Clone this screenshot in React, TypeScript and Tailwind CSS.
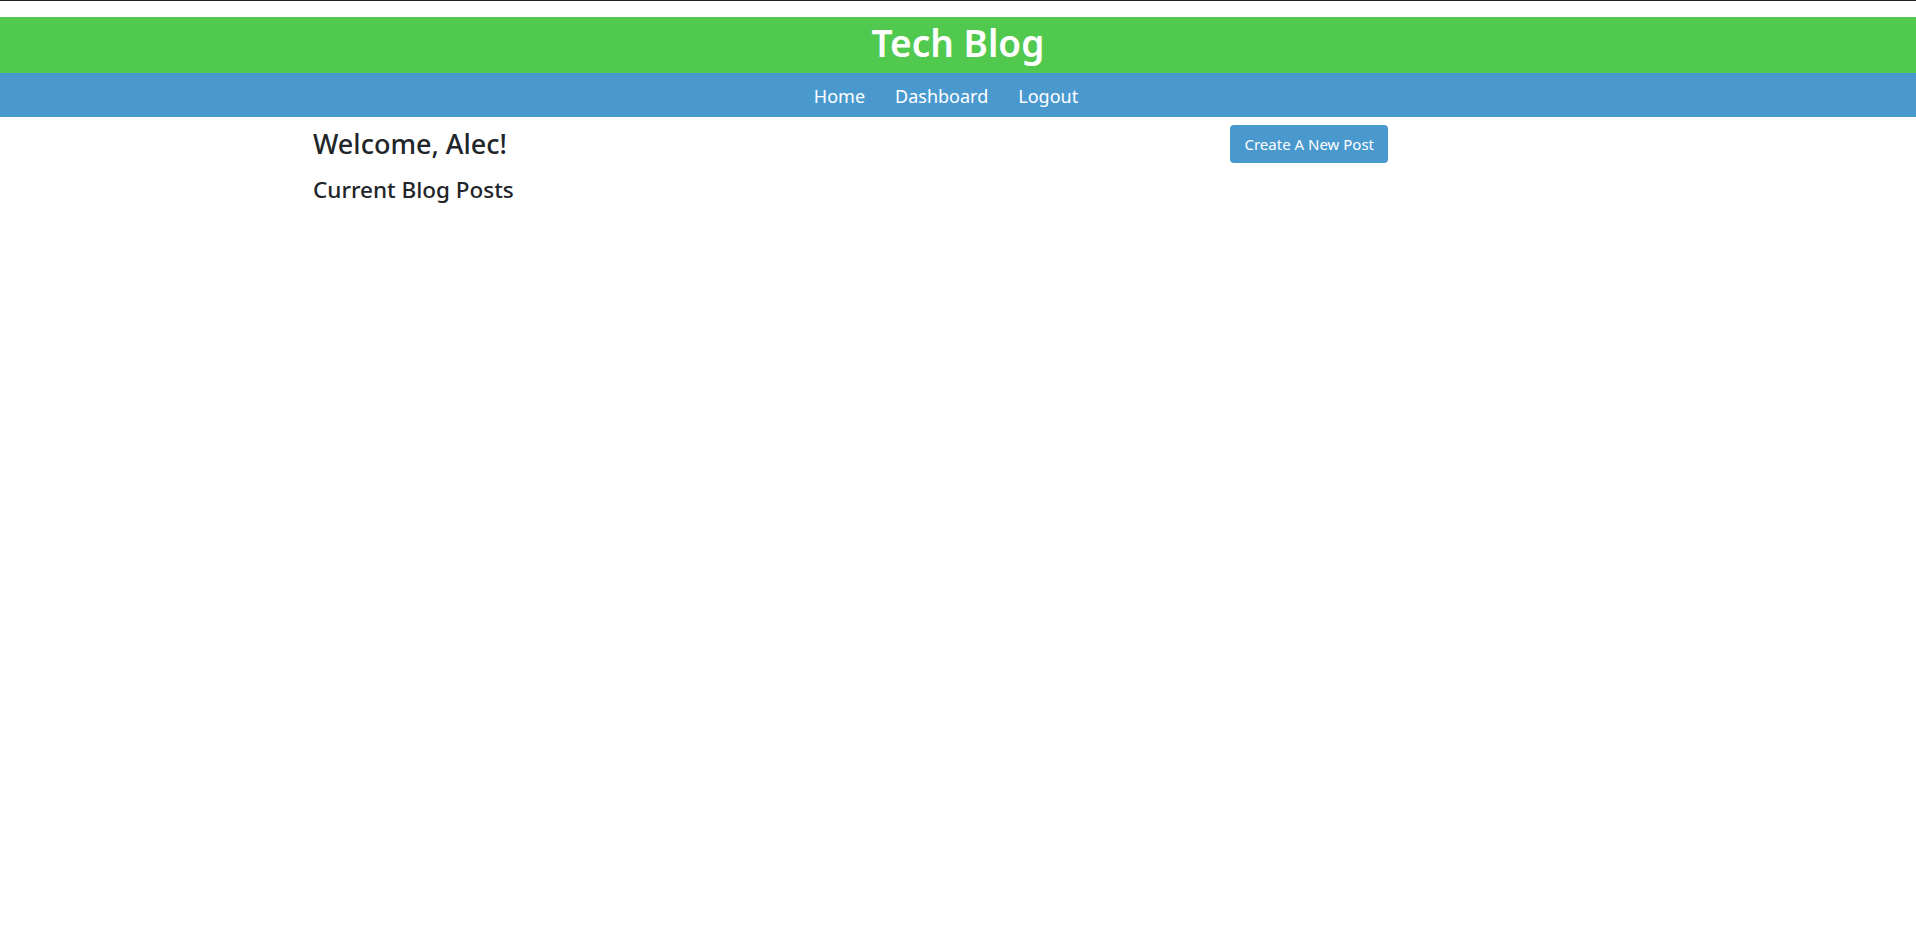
import React from 'react';

const font = { fontFamily: '"Noto Sans", "Open Sans", sans-serif' };

export default function App() {
    return (
        <div className="min-h-screen bg-white text-[#212529]" style={font}>
            <div className="h-px bg-[#222222]"></div>
            <div className="h-4"></div>
            <header className="h-[56px] bg-[#51c94f] flex items-center justify-center pb-[6px]">
                <h1 className="text-[37px] font-semibold text-white leading-none">Tech Blog</h1>
            </header>
            <nav className="h-[44px] bg-[#4999cf] flex items-center justify-center gap-[30px] text-[18px] text-white pt-[2px] pr-[24px]">
                <a href="#">Home</a>
                <a href="#">Dashboard</a>
                <a href="#">Logout</a>
            </nav>
            <main className="ml-[313px] w-[1075px] pt-2">
                <div className="flex items-center justify-between">
                    <h3 className="text-[27px] font-medium leading-tight">Welcome, Alec!</h3>
                    <button className="h-[38px] px-[14px] rounded bg-[#4999cf] text-white text-[15px]">
                        Create A New Post
                    </button>
                </div>
                <h4 className="mt-[13px] text-[22.5px] font-medium leading-tight">Current Blog Posts</h4>
            </main>
        </div>
    );
}
